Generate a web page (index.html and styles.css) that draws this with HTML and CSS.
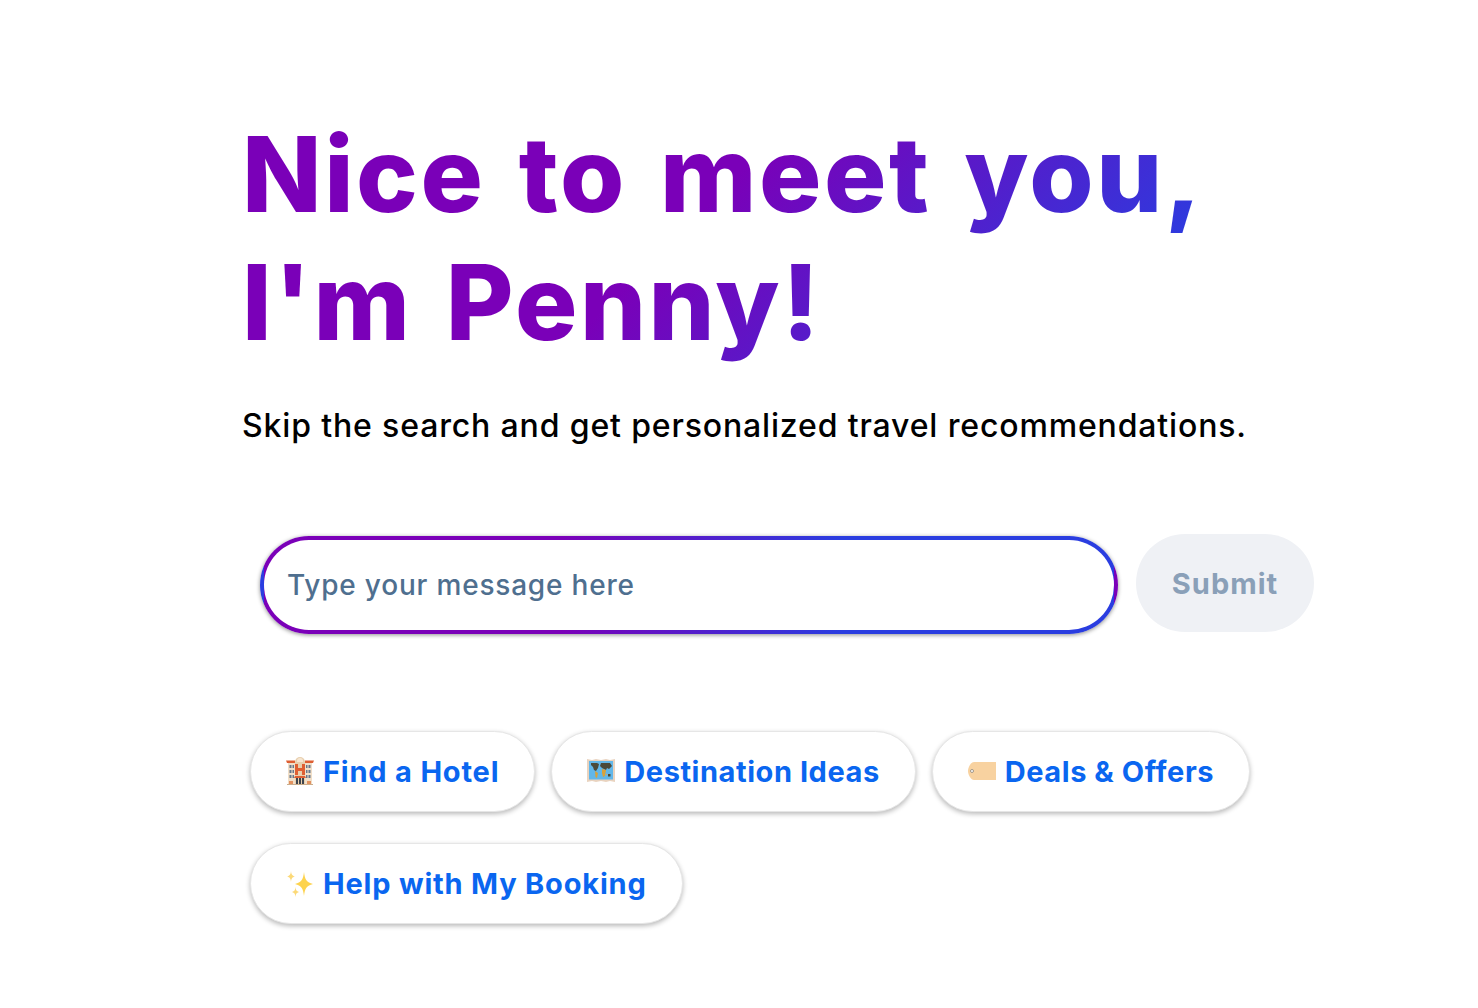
FILE: index.html
```html
<!DOCTYPE html>
<html lang="en">
<head>
<meta charset="utf-8">
<title>Penny</title>
<link rel="stylesheet" href="styles.css">
</head>
<body>
<main class="page">
  <h1 class="headline">Nice to meet you,<br>I'm Penny!</h1>
  <p class="lead">Skip the search and get personalized travel recommendations.</p>
  <form class="ask">
    <div class="field"><input class="field-input" type="text" placeholder="Type your message here"></div>
    <button class="submit" type="button">Submit</button>
  </form>
  <div class="chips">
    <button class="chip" type="button">
      <svg class="emoji" viewBox="0 0 28 28"><path fill="#f1dfc8" d="M2 5h24v22H2z"/><path fill="#e8cfae" d="M9 4a5 5 0 0 1 10 0v23H9z"/><path fill="#f6e6d2" d="M11 3a3 3 0 0 1 6 0v1h-6z"/><path fill="#de5f32" d="M0 2.500h9V5H1zM19 2.500h9L27 5h-8z"/><path fill="#de5f32" d="M9 6h3v4h4V6h3v11h-3v-4h-4v4H9z"/><path fill="#66788c" d="M3.500 7h2v3h-2zm3 0h1.500v3H6.500zm13.500 0h1.500v3H20zm2.500 0h2v3h-2zM3.500 12h2v3h-2zm3 0h1.500v3H6.500zm13.500 0h1.500v3H20zm2.500 0h2v3h-2zM3.500 17h2v3h-2zm3 0h1.500v3H6.500zm13.500 0h1.500v3H20zm2.500 0h2v3h-2z"/><path fill="#de5f32" d="M9 18h10l1 2H8z"/><path fill="#3d444e" d="M10 20h8v7h-8z"/><path fill="#e8cfae" d="M12 20h1v7h-1zm3 0h1v7h-1z"/><path fill="#e3915f" d="M3 23h4v4H3zM21 23h4v4h-4z"/><path fill="#c9ad8c" d="M1 26h26v1H1z"/></svg>
      Find a Hotel
    </button>
    <button class="chip chip-tight" type="button">
      <svg class="emoji" viewBox="0 0 28 28"><path fill="#e9d3bf" d="M0 1l5 1 4-1 5 1 5-1 4 1 5-1v23l-5-1-4 1-5-1-5 1-4-1-5 1z"/><path fill="#62b7ea" d="M2 3h24v18.500H2z"/><path fill="#4b4a3a" d="M4 5h6l2 1-1 4-2 3-2-1-1-3-2-2zM14 5h9l2 3-3 3-2-1-1 2-2-1-2-1-2-2z"/><path fill="#d9a23a" d="M8 13l3 2-1 5-1.500-1zM15 11l4 1-1 6-2 1-1-4z"/><path fill="#4b4a3a" d="M21 16h2.500v2.500H21z"/><path fill="#f4a04a" d="M19 16h1v1h-1z"/></svg>
      Destination Ideas
    </button>
    <button class="chip chip-tight" type="button">
      <svg class="emoji" viewBox="0 0 28 28"><path fill="#f8d2a0" d="M6 4h22v18H6C3 22 0 17 0 13s3-9 6-9z"/><circle cx="4" cy="13" r="1.500" fill="#fff" stroke="#9a8f80" stroke-width=".9"/></svg>
      Deals &amp; Offers
    </button>
    <button class="chip" type="button">
      <svg class="emoji" viewBox="0 0 28 28"><path fill="#fdd34e" d="M18 2c.8 7.500 2.700 10.500 9 12-6.300 1.500-8.200 4.500-9 12-.8-7.500-2.700-10.500-9-12 6.300-1.500 8.200-4.500 9-12z"/><path fill="#fcd977" d="M5 1c.3 3.500 1.200 4.800 4 5.500C6.200 7.200 5.300 8.500 5 12c-.3-3.500-1.200-4.800-4-5.500C3.800 5.800 4.700 4.500 5 1zM9.500 17c.3 3.200 1 4.300 3.500 5-2.500.7-3.200 1.800-3.500 5-.3-3.200-1-4.300-3.500-5 2.500-.7 3.200-1.800 3.500-5z"/></svg>
      Help with My Booking
    </button>
  </div>
</main>
</body>
</html>
```

FILE: styles.css
```css
* { box-sizing: border-box; }
html, body { margin: 0; background: #fff; }
body { font-family: Inter, "Liberation Sans", sans-serif; }
.page { padding: 110px 0 0 242px; width: 1478px; height: 1008px; overflow: hidden; }
.headline {
  margin: 0;
  width: max-content;
  font-size: 104px;
  line-height: 128px;
  font-weight: 800;
  letter-spacing: 2.5px;
  word-spacing: 8px;
  background: linear-gradient(135deg, #7a00b8 46%, #2a3de0 90%);
  -webkit-background-clip: text;
  background-clip: text;
  color: transparent;
}
.lead { margin: 36px 0 0; font-size: 32px; line-height: 48px; font-weight: 500; color: #000; letter-spacing: .85px; }
.ask { display: flex; align-items: flex-start; gap: 18px; margin: 84px 0 0 18px; }
.field {
  width: 858px; height: 98px; margin-top: 2px;
  border: 4px solid transparent; border-radius: 49px;
  background: linear-gradient(#fff, #fff) padding-box, linear-gradient(90deg, #7a00b8 35%, #2a3de0 68%);
  box-shadow: 0 1px 4px rgba(0,0,0,.45);
}
.field-input {
  display: block; width: 100%; height: 100%; padding: 0 23px;
  border: 0; background: transparent; outline: 0;
  font: 500 28px Inter, sans-serif; letter-spacing: .8px; color: #4f6f8f;
}
.field-input::placeholder { color: #4f6f8f; opacity: 1; }
.submit {
  width: 178px; height: 98px; border: 0; border-radius: 49px; background: #eff1f5;
  font: 700 29px Inter, sans-serif; color: #8aa0b8; letter-spacing: 1px;
}
.chips { display: flex; flex-wrap: wrap; gap: 31px 16px; width: 1040px; margin: 97px 0 0 8px; }
.chip {
  display: flex; align-items: center; gap: 9px; height: 81px; padding: 0 35px;
  background: #fff; border: 1px solid #e6e6e6; border-radius: 40.5px;
  box-shadow: 0 2px 5px rgba(0,0,0,.28);
  font: 700 29px Inter, sans-serif; color: #0a66f0; letter-spacing: .8px; white-space: nowrap;
}
.chip-tight { letter-spacing: .55px; }
.emoji { width: 28px; height: 28px; flex: none; overflow: visible; }
```
